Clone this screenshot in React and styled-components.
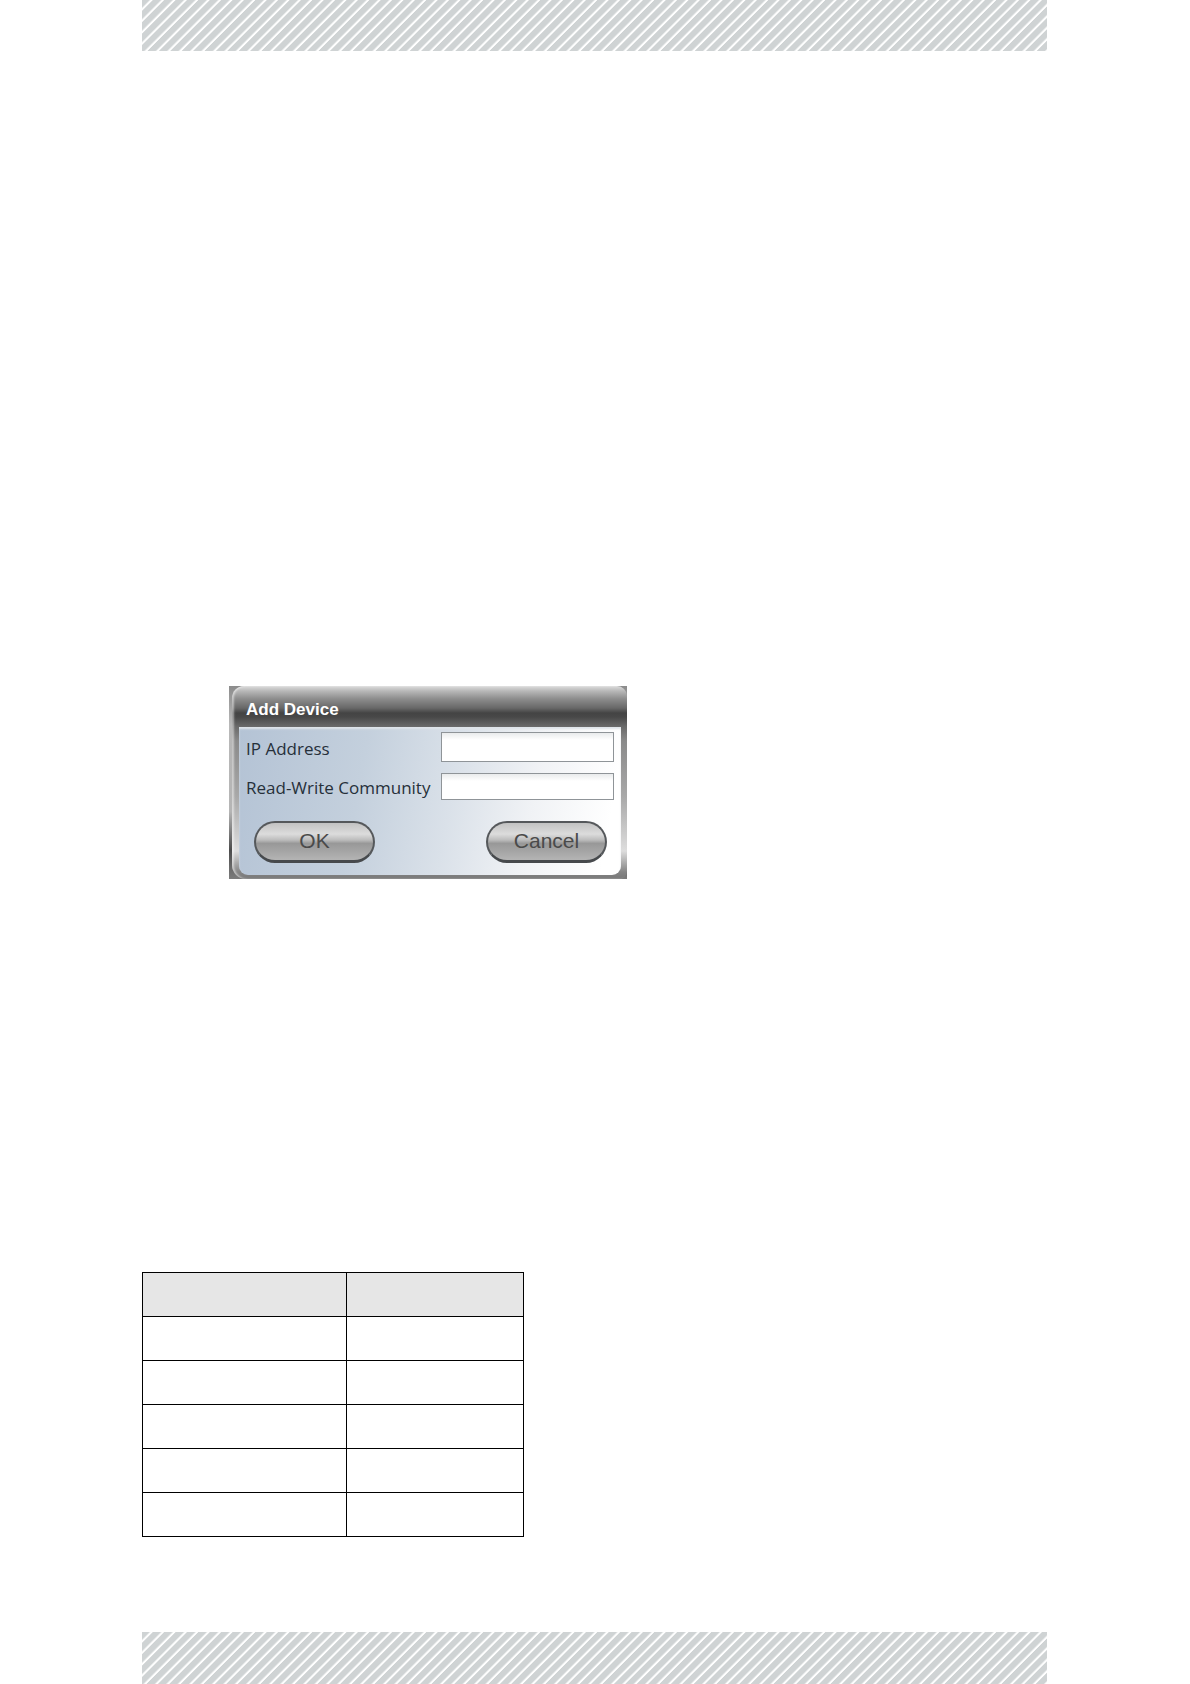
import React, { useState } from 'react';
import styled, { createGlobalStyle } from 'styled-components';

const ROWS = 5;

function AddDevice(){
    const [ip, setIp] = useState('');
    const [community, setCommunity] = useState('');

    return (
        <Frame>
            <Dialog onSubmit={e => e.preventDefault()}>
                <Title>Add Device</Title>
                <Body>
                    <Field>
                        <Label htmlFor="ip">IP Address</Label>
                        <Input id="ip" $height={30} value={ip} onChange={e => setIp(e.target.value)} />
                    </Field>
                    <Field>
                        <Label htmlFor="community">Read-Write Community</Label>
                        <Input id="community" $height={27} value={community} onChange={e => setCommunity(e.target.value)} />
                    </Field>
                    <Actions>
                        <Button type="submit">OK</Button>
                        <Button type="button">Cancel</Button>
                    </Actions>
                </Body>
            </Dialog>
        </Frame>
    )
}

function App(){
    return (
        <Page>
            <GlobalStyle />
            <Stripes as="header" $height={51} />
            <Main>
                <AddDevice />
                <Table>
                    <colgroup>
                        <col width="204" />
                        <col width="177" />
                    </colgroup>
                    <thead>
                        <tr><th></th><th></th></tr>
                    </thead>
                    <tbody>
                        {Array.from({ length: ROWS }, (_, i) => (
                            <tr key={i}><td></td><td></td></tr>
                        ))}
                    </tbody>
                </Table>
            </Main>
            <Stripes as="footer" $height={52} />
        </Page>
    )
}

const GlobalStyle = createGlobalStyle`
    body {
        margin: 0;
        background: #fff;
        font-family: "Liberation Sans", Arial, sans-serif;
    }
    *, *::before, *::after { box-sizing: border-box; }
`;

const Page = styled.div`
    display: flex;
    flex-direction: column;
    min-height: 100vh;
    padding: 0 143px 0 142px;
`;

const Stripes = styled.div`
    flex: none;
    height: ${props => props.$height}px;
    background-image: repeating-linear-gradient(
        135deg,
        #cfd3d4 0%,
        #cfd3d4 6%,
        #fff 8%,
        #fff 9%,
        #cfd3d4 10%
    );
    background-size: 57px 57px;
`;

const Main = styled.main`
    flex: 1;
    padding: 635px 0 95px;
`;

const Frame = styled.section`
    width: 398px;
    margin: 0 0 393px 87px;
    padding-left: 3px;
    background: linear-gradient(#8c8c8c, #b8b8b8 20%, #b5b5b5 65%, #4c4c4c 85%, #7c7c7c);
`;

const Dialog = styled.form`
    padding: 0 6px 4px 7px;
    border-radius: 12px 10px 8px 14px;
    background: linear-gradient(
        #dcdcdc 0px,
        #b8b8b8 5px,
        #8c8c8c 13px,
        #686868 22px,
        #444 27px,
        #484848 31px,
        #686868 40px,
        #8a8a8a 55px,
        #a8a8a8 110px,
        #ddd 165px,
        #858585 186px,
        #777 193px
    );
    box-shadow: inset 2px 0 2px rgba(255, 255, 255, 0.5);
`;

const Title = styled.h1`
    height: 41px;
    margin: 0;
    padding: 3px 7px 0;
    color: #fff;
    font-size: 17px;
    font-weight: bold;
    line-height: 41px;
`;

const Body = styled.div`
    height: 148px;
    padding: 5px 7px 0;
    border-radius: 0 0 9px 9px;
    background: linear-gradient(100deg, #b4c3d5 0%, #c4d0dd 32%, #dae1e9 55%, #f0f2f5 75%, #fff 95%);
    box-shadow: inset 0 2px 2px #dfe4e9;
`;

const Field = styled.div`
    display: flex;
    align-items: center;
    justify-content: space-between;
    margin-bottom: 11px;
    color: #26303a;
    font-family: "Open Sans", "Noto Sans", sans-serif;
    font-size: 17px;
    line-height: 24px;
    white-space: nowrap;
`;

const Label = styled.label`
    padding-top: 3px;
`;

const Input = styled.input`
    flex: none;
    width: 173px;
    height: ${props => props.$height}px;
    padding: 0 6px;
    border: 1px solid #8f9498;
    outline: 0;
    background: linear-gradient(#e9ebec, #fff 7px);
    font: inherit;
`;

const Actions = styled.div`
    display: flex;
    justify-content: space-between;
    padding: 10px 7px 0 8px;
`;

const Button = styled.button`
    width: 121px;
    height: 42px;
    padding: 0 0 1px;
    border: 2px solid #55585b;
    border-bottom: 3px solid #46494c;
    border-radius: 21px;
    background: linear-gradient(#c2c2c2, #dcdcdc 30%, #bcbcbc 46%, #989898 55%, #a4a4a4 75%, #b4b4b4);
    color: #4a4a4a;
    font-family: inherit;
    font-size: 21px;
    cursor: pointer;
`;

const Table = styled.table`
    table-layout: fixed;
    width: 382px;
    border-collapse: collapse;

    & th, & td {
        height: 44px;
        padding: 0;
        border: 1px solid #000;
    }
    & th { background: #e6e6e6; }
`;

export default App;
